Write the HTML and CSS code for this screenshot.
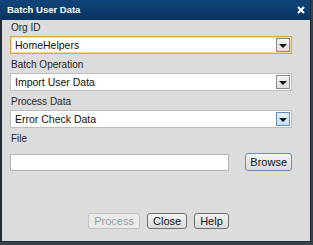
FILE: index.html
```html
<!DOCTYPE html>
<html lang="en">
<head>
    <meta charset="UTF-8">
    <title>Batch User Data</title>
    <link rel="stylesheet" href="styles.css">
</head>
<body>
    <div class="dialog">
        <div class="titlebar">
            <span class="title">Batch User Data</span>
            <svg class="close-x" width="8" height="8" viewBox="0 0 8 8">
                <path d="M1 1 L7 7 M7 1 L1 7" stroke="#fff" stroke-width="2"/>
            </svg>
        </div>

        <div class="content">
            <div class="field">
                <div class="label">Org ID</div>
                <div class="select focused">
                    <span>HomeHelpers</span>
                    <span class="drop"><i></i></span>
                </div>
            </div>

            <div class="field">
                <div class="label">Batch Operation</div>
                <div class="select">
                    <span>Import User Data</span>
                    <span class="drop"><i></i></span>
                </div>
            </div>

            <div class="field">
                <div class="label">Process Data</div>
                <div class="select">
                    <span>Error Check Data</span>
                    <span class="drop hover"><i></i></span>
                </div>
            </div>

            <div class="field file-field">
                <div class="label">File</div>
                <div class="file-row">
                    <div class="file-input"></div>
                    <button class="btn browse">Browse</button>
                </div>
            </div>
        </div>

        <div class="footer">
            <button class="btn disabled">Process</button>
            <button class="btn">Close</button>
            <button class="btn">Help</button>
        </div>
    </div>
</body>
</html>
```

FILE: styles.css
```css
body {
    margin: 0;
    background: #3a4148;
    font-family: "Liberation Sans", Arial, sans-serif;
    font-size: 11px;
    color: #222;
}

.dialog {
    width: 311px;
    height: 242px;
    box-sizing: border-box;
    background: #dcdcdc;
    border: 1px solid #1e2a36;
    border-left-width: 2px;
    border-top: none;
    display: flex;
    flex-direction: column;
}

.titlebar {
    height: 20px;
    background: linear-gradient(#11457a, #083461);
    display: flex;
    align-items: center;
    justify-content: space-between;
    padding: 0 5px 2px 7px;
    box-sizing: border-box;
    margin-left: -2px;
}

.title {
    color: #fff;
    font-weight: bold;
    font-size: 9.5px;
}

.close-x {
    margin-top: 1px;
}

.content {
    padding: 1px 18px 0 8px;
}

.field {
    margin-bottom: 4px;
}

.label {
    font-size: 10px;
    line-height: 14px;
    margin-bottom: 1px;
    padding-left: 1px;
    color: #262626;
}

.select {
    height: 18px;
    box-sizing: border-box;
    background: #fff;
    border: 1px solid #bdbdbd;
    display: flex;
    align-items: center;
    justify-content: space-between;
    padding: 0 1px 0 4px;
    font-size: 10.5px;
    color: #111;
}

.select.focused {
    border: 1px solid #d8a54a;
    box-shadow: inset 0 0 0 1px #f1d9a6;
}

.drop {
    width: 14px;
    height: 14px;
    box-sizing: border-box;
    border: 1px solid #8a8a8a;
    background: linear-gradient(#f4f4f4, #dcdcdc);
    display: flex;
    align-items: center;
    justify-content: center;
}

.drop.hover {
    border-color: #5a90c6;
    background: linear-gradient(#e4f1fc, #c6e0f6);
}

.drop i {
    width: 0;
    height: 0;
    border-left: 4px solid transparent;
    border-right: 4px solid transparent;
    border-top: 4px solid #111;
    margin-top: 2px;
}

.file-field .label {
    margin-bottom: 7px;
}

.file-row {
    display: flex;
    align-items: center;
}

.file-input {
    width: 221px;
    height: 17px;
    box-sizing: border-box;
    background: #fff;
    border: 1px solid #b4b4b4;
}

.btn {
    font-family: "Liberation Sans", Arial, sans-serif;
    font-size: 11px;
    height: 16px;
    padding: 0 5px;
    border: 1px solid #707070;
    border-radius: 3px;
    background: linear-gradient(#f4f4f4, #dadada);
    color: #111;
    line-height: 14px;
}

.browse {
    margin-left: 16px;
    height: 18px;
    width: 47px;
    padding: 0;
    border-color: #6f8db0;
}

.btn.disabled {
    color: #9c9c9c;
    border-color: #c0c0c0;
    background: #eaeaea;
}

.footer {
    margin-top: auto;
    padding-bottom: 12px;
    display: flex;
    justify-content: center;
    gap: 7px;
    margin-left: 5px;
}
```
